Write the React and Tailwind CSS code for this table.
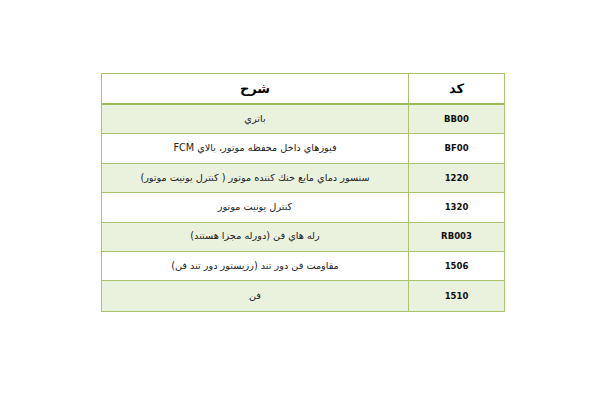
import React from "react";

const rows = [
  { code: "BB00", desc: "باتري", fill: true },
  { code: "BF00", desc: "فيوزهاي داخل محفظه موتور، بالاي FCM", fill: false },
  { code: "1220", desc: "سنسور دماي مايع خنك كننده موتور ( كنترل يونيت موتور)", fill: true },
  { code: "1320", desc: "كنترل يونيت موتور", fill: false },
  { code: "RB003", desc: "رله هاي فن (دورله مجزا هستند)", fill: true },
  { code: "1506", desc: "مقاومت فن دور تند (رزيستور دور تند فن)", fill: false },
  { code: "1510", desc: "فن", fill: true },
];

export default function App() {
  return (
    <div
      className="w-[600px] h-[400px] bg-white pt-[73px] pl-[101px] text-[#111111]"
      style={{ fontFamily: '"DejaVu Sans", "Noto Sans", sans-serif' }}
    >
      <div dir="rtl" className="w-[404px] border border-[#a9c46c]">
        <div className="flex h-[31px] border-b-2 border-[#9bbb59]">
          <div className="w-[96px] shrink-0 flex items-center justify-center border-l border-[#a9c46c] font-bold text-[13px] text-black">
            کد
          </div>
          <div className="flex-1 flex items-center justify-center font-bold text-[13px] text-black">
            شرح
          </div>
        </div>
        {rows.map((r, i) => (
          <div
            key={i}
            className={
              "flex h-[29.4px] " +
              (i < rows.length - 1 ? "border-b border-[#a9c46c] " : "") +
              (r.fill ? "bg-[#eaf1dc]" : "bg-white")
            }
          >
            <div className="w-[96px] shrink-0 flex items-center justify-center border-l border-[#a9c46c] font-bold text-[8.5px]">
              <span dir="ltr">{r.code}</span>
            </div>
            <div className="flex-1 flex items-center justify-center text-[9.7px] text-[#222222]">
              {r.desc}
            </div>
          </div>
        ))}
      </div>
    </div>
  );
}
